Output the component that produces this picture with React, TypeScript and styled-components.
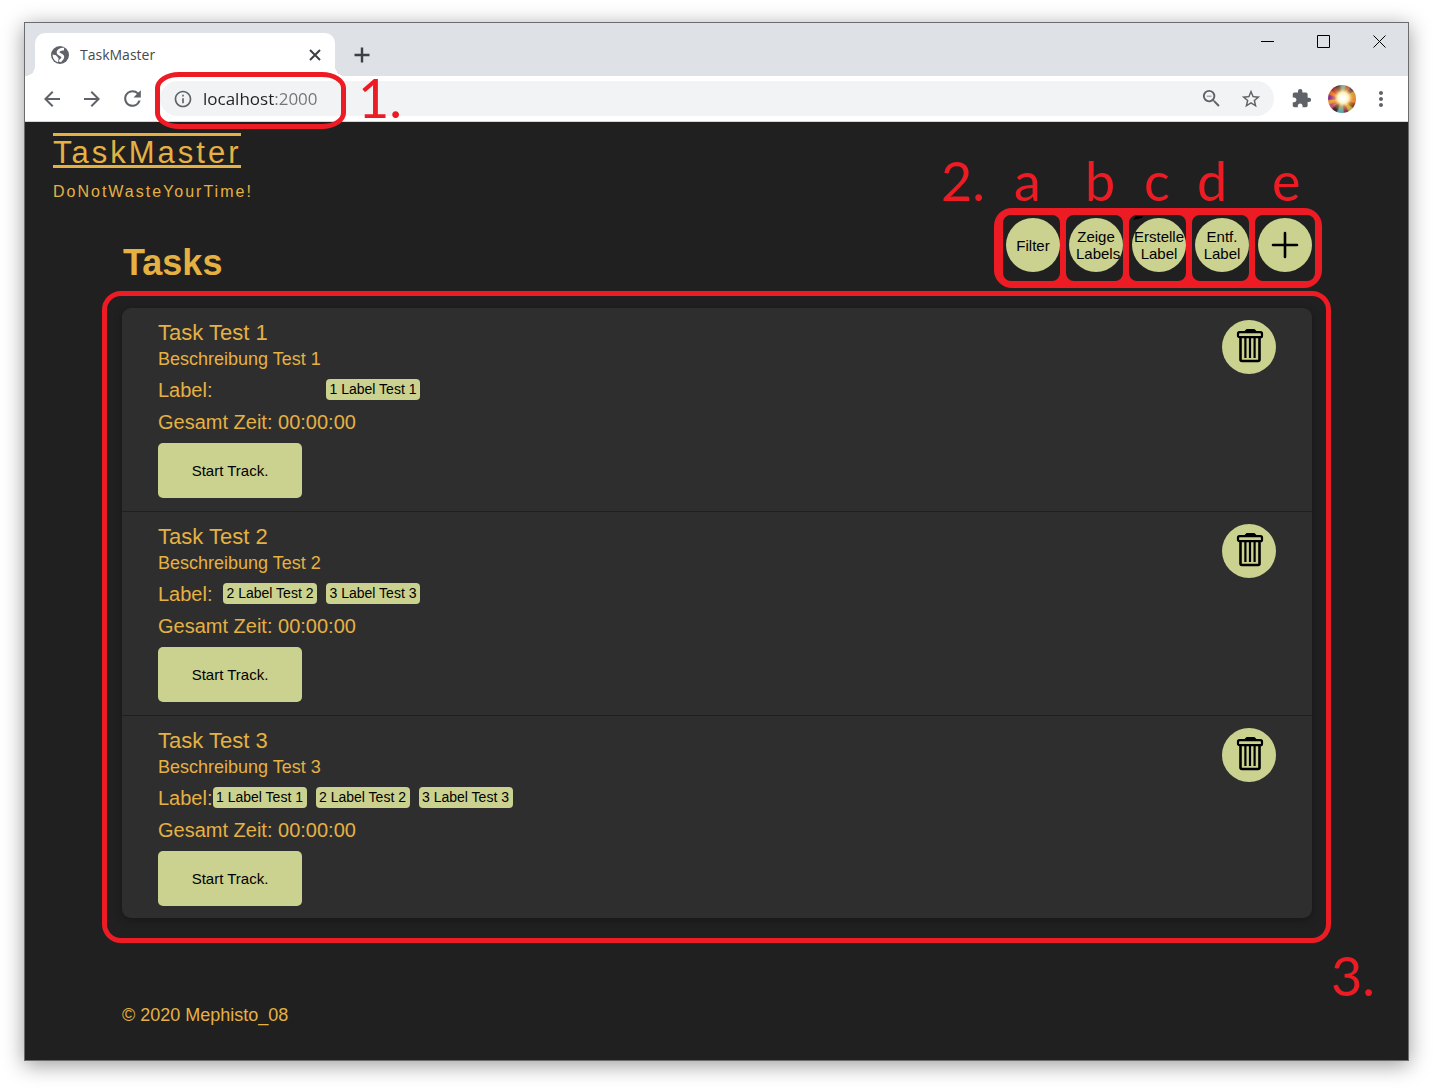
import React from "react";
import styled, { createGlobalStyle } from "styled-components";
import {
  MdArrowBack,
  MdArrowForward,
  MdExtension,
  MdInfoOutline,
  MdMoreVert,
  MdRefresh,
  MdStarBorder,
  MdZoomOut,
} from "react-icons/md";

const color = {
  red: "#ed1c24",
  page: "#202020",
  card: "#2e2e2e",
  gold: "#e5b143",
  lime: "#cbd18f",
  chrome: "#dee1e6",
  icon: "#5f6368",
};

const GlobalStyle = createGlobalStyle`
  *, *::before, *::after { box-sizing: border-box; }
  body {
    margin: 0;
    background: #fff;
    font-family: "Liberation Sans", Arial, sans-serif;
  }
  button { font-family: inherit; cursor: pointer; }
  h1, h2, p, ul { margin: 0; padding: 0; font-weight: normal; }
`;

const Desktop = styled.div`
  display: flex;
  min-height: 100vh;
  padding: 22px 28px 29px 24px;
`;

const Window = styled.div`
  flex: 1;
  min-width: 0;
  display: flex;
  flex-direction: column;
  border: 1px solid #6b6c6e;
  box-shadow: 0 4px 20px rgba(0, 0, 0, 0.4);
`;

/* Browser chrome */

const TabStrip = styled.div`
  display: flex;
  align-items: flex-end;
  height: 53px;
  padding-left: 10px;
  background: ${color.chrome};
`;

const Tab = styled.div`
  position: relative;
  display: flex;
  align-items: center;
  width: 300px;
  height: 43px;
  padding: 0 10px 0 14px;
  border-radius: 10px 10px 0 0;
  background: #fff;
  color: ${color.icon};

  &::before,
  &::after {
    content: "";
    position: absolute;
    bottom: 0;
    width: 10px;
    height: 10px;
  }
  &::before {
    left: -10px;
    background: radial-gradient(circle at 0 0, transparent 10px, #fff 10px);
  }
  &::after {
    right: -10px;
    background: radial-gradient(circle at 100% 0, transparent 10px, #fff 10px);
  }
`;

const TabTitle = styled.span`
  flex: 1;
  padding-left: 9px;
  font: 14px/20px "Open Sans", sans-serif;
  color: #45494d;
`;

const IconButton = styled.button<{ $size?: number }>`
  display: flex;
  flex: none;
  align-items: center;
  justify-content: center;
  width: ${(p) => p.$size ?? 40}px;
  height: ${(p) => p.$size ?? 40}px;
  padding: 0;
  border: 0;
  background: none;
  color: ${color.icon};
`;

const NewTab = styled(IconButton)`
  align-self: center;
  margin: 10px 0 0 7px;
  color: #3c4043;
`;

const WindowControls = styled.div`
  display: flex;
  align-self: flex-start;
  margin-left: auto;
`;

const WindowControl = styled.button`
  display: grid;
  place-items: center;
  width: 56px;
  height: 37px;
  padding: 0;
  border: 0;
  background: none;
`;

const Toolbar = styled.div`
  position: relative;
  z-index: 1;
  display: flex;
  align-items: center;
  height: 46px;
  padding: 0 7px;
  border-bottom: 1px solid #d5d6d8;
  background: #fff;
`;

const AddressBar = styled.div`
  position: relative;
  flex: 1;
  display: flex;
  align-items: center;
  height: 35px;
  margin: 0 7px 0 8px;
  padding: 0 3px 0 13px;
  border-radius: 18px;
  background: #f1f3f4;
  color: ${color.icon};
`;

const AddressInput = styled.input`
  flex: 1;
  min-width: 0;
  padding: 0;
  margin-left: 10px;
  border: 0;
  outline: 0;
  font: 17px/24px "Open Sans", sans-serif;
  color: #202124;
  background: linear-gradient(90deg, #202124 71px, #70757a 71px);
  background-clip: text;
  -webkit-text-fill-color: transparent;
`;

const Avatar = styled.button`
  width: 28px;
  height: 28px;
  margin: 0 5px 0 7px;
  padding: 0;
  border: 0;
  border-radius: 50%;
  background:
    radial-gradient(circle at 54% 46%, #fff 10%, #fff1b8 26%, rgba(250, 180, 80, 0.55) 42%, transparent 64%),
    conic-gradient(
      #5fb0b8 0deg 12deg,
      #b0503a 20deg 32deg,
      #402a50 40deg 52deg,
      #c89030 60deg 80deg,
      #e8762c 90deg 104deg,
      #7a3a20 112deg 126deg,
      #b8b040 134deg 148deg,
      #8b2d5c 156deg 168deg,
      #58a8b0 176deg 196deg,
      #3a2a30 206deg 220deg,
      #c05070 230deg 244deg,
      #e8a030 252deg 262deg,
      #8a2a90 270deg 284deg,
      #e06a28 292deg 304deg,
      #a02828 312deg 326deg,
      #503040 334deg 346deg,
      #5fb0b8 360deg
    );
`;

/* Red call-outs drawn over the interface */

const Ring = styled.div`
  position: absolute;
  border: 5px solid ${color.red};
  pointer-events: none;
`;

const AddressRing = styled(Ring)`
  left: -5px;
  top: -9px;
  width: 191px;
  height: 57px;
  border-radius: 24px / 16px;
`;

const ListRing = styled(Ring)`
  inset: -17px -19px -25px -20px;
  border-radius: 19px;
`;

const Note = styled.span<{ $x: number; $y: number }>`
  position: absolute;
  left: ${(p) => p.$x}px;
  top: ${(p) => p.$y}px;
  font: 54px/60px Lato, sans-serif;
  color: ${color.red};
  pointer-events: none;
`;

/* Application page */

const Page = styled.div`
  flex: 1;
  background: ${color.page};
  color: ${color.gold};
`;

const Header = styled.header`
  padding: 11px 28px 0;
`;

const Brand = styled.a`
  display: block;
  width: fit-content;
  padding-top: 4px;
  border: solid ${color.gold};
  border-width: 3px 0;
  font-size: 31px;
  line-height: 25px;
  letter-spacing: 3px;
  color: inherit;
  text-decoration: none;
`;

const Slogan = styled.p`
  margin-top: 14px;
  font-size: 16px;
  line-height: 20px;
  letter-spacing: 2px;
`;

const Content = styled.main`
  padding: 6px 96px 0 97px;
`;

const SectionHead = styled.div`
  display: flex;
  justify-content: space-between;
  align-items: flex-start;
`;

const Heading = styled.h1`
  padding: 33px 0 0 1px;
  font-size: 36px;
  font-weight: bold;
  line-height: 44px;
`;

const Actions = styled.div`
  position: relative;
  display: flex;
  gap: 6px;
  margin-right: -10px;
  padding: 7px 7px 7px 9px;
  border-radius: 18px;
  background: ${color.red};
`;

const ActionCell = styled.div`
  position: relative;
  width: 57px;
  height: 66px;
  padding: 3px 0 0 3px;
  border-radius: 8px;
  background: ${color.page};

  &:last-of-type {
    width: 60px;
  }
`;

const Scribble = styled.svg`
  position: absolute;
  left: 3px;
  top: 0;
`;

const RoundButton = styled.button`
  display: flex;
  flex: none;
  align-items: center;
  justify-content: center;
  width: 54px;
  height: 54px;
  padding: 0;
  border: 0;
  border-radius: 50%;
  background: ${color.lime};
  color: #000;
  font-size: 15px;
  line-height: 17px;
  white-space: pre;
`;

const TaskPanel = styled.div`
  position: relative;
  margin-top: 20px;
`;

const TaskList = styled.ul`
  list-style: none;
  border-radius: 9px;
  background: ${color.card};
  box-shadow: 0 2px 8px rgba(0, 0, 0, 0.3);
`;

const TaskItem = styled.li`
  display: flex;
  justify-content: space-between;
  padding: 12px 36px 13px;

  & + & {
    border-top: 1px solid #1f1f1f;
  }
  &:last-child {
    padding-bottom: 12px;
  }
`;

const TaskTitle = styled.h2`
  font-size: 22px;
  line-height: 25px;
`;

const Description = styled.p`
  font-size: 18px;
  line-height: 29px;
`;

const LabelLine = styled.div`
  display: flex;
  align-items: center;
  width: fit-content;
  min-width: 262px;
  font-size: 20px;
  line-height: 32px;
`;

const Chips = styled.div`
  display: flex;
  gap: 9px;
  margin-left: auto;
  padding-bottom: 2px;
`;

const Chip = styled.span`
  width: 94px;
  border-radius: 4px;
  background: ${color.lime};
  color: #000;
  font-size: 14px;
  line-height: 21px;
  text-align: center;
  white-space: nowrap;
`;

const TotalTime = styled.p`
  font-size: 20px;
  line-height: 32px;
`;

const TrackButton = styled.button`
  width: 144px;
  height: 55px;
  margin-top: 5px;
  padding: 0;
  border: 0;
  border-radius: 5px;
  background: ${color.lime};
  color: #000;
  font-size: 15px;
`;

const Footer = styled.footer`
  padding: 84px 0 28px;
  font-size: 18px;
  line-height: 26px;
`;

const GlobeIcon = () => (
  <svg width="22" height="22" viewBox="0 0 22 22">
    <circle cx="11" cy="11" r="9" fill={color.icon} />
    <path d="M15 5.2C11.500 5 8.500 6.600 9.200 9c.6 1.900 4.800 1.400 4.600 4.200-.1 2.200-2.300 2.600-3 4.600" fill="none" stroke="#fff" strokeWidth="2.800" />
    <path d="M3.600 10.400l3.400.8 2.600 3-.6 4c-3.200-.9-5.400-3.800-5.400-7.800z" fill="#fff" />
  </svg>
);

const CloseIcon = () => (
  <svg width="12" height="12" viewBox="0 0 12 12" stroke="#3c4043" strokeWidth="2">
    <path d="M1 1l10 10M11 1L1 11" />
  </svg>
);

const AddIcon = () => (
  <svg width="16" height="16" viewBox="0 0 16 16" stroke="#3c4043" strokeWidth="2.400">
    <path d="M8 .5v15M.5 8h15" />
  </svg>
);

const PlusIcon = () => (
  <svg width="28" height="28" viewBox="0 0 28 28" stroke="#000" strokeWidth="2.600" strokeLinecap="round">
    <path d="M14 2v24M2 14h24" />
  </svg>
);

const TrashIcon = () => (
  <svg width="30" height="38" viewBox="-2 0 30 38" fill="none" stroke="#000" strokeLinejoin="round">
    <path d="M9.500 3.500l1.500-1.500h7L19.500 3.500z" fill="#000" strokeWidth="2" />
    <rect x="2" y="4.200" width="24" height="5" rx="1.500" strokeWidth="2.200" />
    <path d="M4.500 9v22.500a1.500 1.500 0 0 0 1.500 1.500h16a1.500 1.500 0 0 0 1.500-1.500V9" strokeWidth="2.600" />
    <path d="M9.400 10v20M14 10v20M18.600 10v20" strokeWidth="2.200" />
  </svg>
);

const actions = [
  { text: "Filter", note: "a", x: 20 },
  { text: "Zeige\n Labels", note: "b", x: 91 },
  { text: "Erstelle\nLabel", note: "c", x: 150 },
  { text: "Entf.\nLabel", note: "d", x: 203 },
  { text: "", note: "e", x: 278 },
];

const tasks = [
  { id: 1, labels: [1] },
  { id: 2, labels: [2, 3] },
  { id: 3, labels: [1, 2, 3] },
];

function BrowserChrome() {
  return (
    <>
      <TabStrip>
        <Tab>
          <GlobeIcon />
          <TabTitle>TaskMaster</TabTitle>
          <IconButton $size={20} aria-label="Close tab">
            <CloseIcon />
          </IconButton>
        </Tab>
        <NewTab aria-label="New tab">
          <AddIcon />
        </NewTab>
        <WindowControls>
          <WindowControl aria-label="Minimize">
            <svg width="14" height="14" stroke="#000"><path d="M0 6.500h13" /></svg>
          </WindowControl>
          <WindowControl aria-label="Maximize">
            <svg width="14" height="14" stroke="#000" fill="none"><path d="M.5.5h12v12H.5z" /></svg>
          </WindowControl>
          <WindowControl aria-label="Close">
            <svg width="14" height="14" stroke="#000"><path d="M.5.5l12 12M12.500.5l-12 12" /></svg>
          </WindowControl>
        </WindowControls>
      </TabStrip>
      <Toolbar>
        <IconButton aria-label="Back"><MdArrowBack size={24} /></IconButton>
        <IconButton aria-label="Forward"><MdArrowForward size={24} /></IconButton>
        <IconButton aria-label="Reload"><MdRefresh size={25} /></IconButton>
        <AddressBar>
          <MdInfoOutline size={20} />
          <AddressInput aria-label="Address" defaultValue="localhost:2000" />
          <IconButton aria-label="Zoom"><MdZoomOut size={23} /></IconButton>
          <IconButton aria-label="Bookmark"><MdStarBorder size={22} /></IconButton>
          <AddressRing />
          <Note $x={198} $y={-13}>1.</Note>
        </AddressBar>
        <IconButton aria-label="Extensions"><MdExtension size={21} /></IconButton>
        <Avatar aria-label="Profile" />
        <IconButton aria-label="Menu"><MdMoreVert size={24} /></IconButton>
      </Toolbar>
    </>
  );
}

function ActionBar() {
  return (
    <Actions>
      {actions.map((a) => (
        <ActionCell key={a.note}>
          {a.note === "c" && (
            <Scribble width="12" height="6">
              <path d="M1 5L4 1h7l-1 2-4 1z" fill="#000" />
            </Scribble>
          )}
          <RoundButton aria-label={a.text ? undefined : "Neuer Task"}>
            {a.text || <PlusIcon />}
          </RoundButton>
        </ActionCell>
      ))}
      <Note $x={-53} $y={-57}>2.</Note>
      {actions.map((a) => (
        <Note key={a.note} $x={a.x} $y={-57}>{a.note}</Note>
      ))}
    </Actions>
  );
}

export default function App() {
  return (
    <Desktop>
      <GlobalStyle />
      <Window>
        <BrowserChrome />
        <Page>
          <Header>
            <Brand href="#">TaskMaster</Brand>
            <Slogan>DoNotWasteYourTime!</Slogan>
          </Header>
          <Content>
            <SectionHead>
              <Heading>Tasks</Heading>
              <ActionBar />
            </SectionHead>
            <TaskPanel>
              <TaskList>
                {tasks.map(({ id, labels }) => (
                  <TaskItem key={id}>
                    <div>
                      <TaskTitle>Task Test {id}</TaskTitle>
                      <Description>Beschreibung Test {id}</Description>
                      <LabelLine>
                        Label:
                        <Chips>
                          {labels.map((n) => (
                            <Chip key={n}>{`${n} Label Test ${n}`}</Chip>
                          ))}
                        </Chips>
                      </LabelLine>
                      <TotalTime>Gesamt Zeit: 00:00:00</TotalTime>
                      <TrackButton>Start Track.</TrackButton>
                    </div>
                    <RoundButton aria-label={`Task Test ${id} entfernen`}>
                      <TrashIcon />
                    </RoundButton>
                  </TaskItem>
                ))}
              </TaskList>
              <ListRing />
              <Note $x={1209} $y={638}>3.</Note>
            </TaskPanel>
            <Footer>© 2020 Mephisto_08</Footer>
          </Content>
        </Page>
      </Window>
    </Desktop>
  );
}
